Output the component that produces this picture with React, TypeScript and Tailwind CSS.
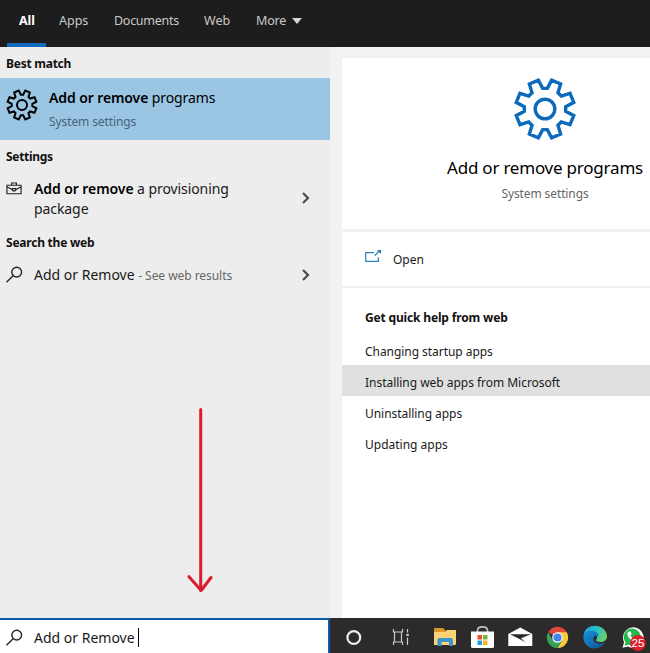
import React from "react";

// Builds the eight-toothed outline of the settings gear around the origin.
const polar = (r: number, deg: number) => {
  const a = (deg * Math.PI) / 180;
  return `${(r * Math.sin(a)).toFixed(2)} ${(-r * Math.cos(a)).toFixed(2)}`;
};
const gearPath =
  "M" +
  Array.from({ length: 8 }, (_, i) => i * 45)
    .flatMap((d) => [polar(20.8, d - 6.5), polar(20.8, d + 6.5), polar(29.5, d + 13), polar(29.5, d + 32)])
    .join("L") +
  "Z";

function Gear({ className, stroke, hub }: { className: string; stroke: number; hub: number }) {
  return (
    <svg viewBox="-32 -32 64 64" className={className} fill="none" stroke="currentColor" strokeWidth={stroke}>
      <path d={gearPath} />
      <circle r={hub} />
    </svg>
  );
}

function SearchIcon() {
  return (
    <svg viewBox="0 0 18 18" className="h-[18px] w-[18px] shrink-0" fill="none" stroke="#262626" strokeWidth="1.4">
      <circle cx="10.7" cy="6.1" r="4.9" />
      <path d="M7.1 9.7L.5 16.2" />
    </svg>
  );
}

function Chevron() {
  return (
    <svg viewBox="0 0 10 14" className="h-[14px] w-[10px] shrink-0" fill="none" stroke="#4c4c4c" strokeWidth="2.2">
      <path d="M2 2L7 7L2 12" />
    </svg>
  );
}

function Header() {
  return (
    <header className="flex h-[46.5px] shrink-0 bg-[#1d1d1d] text-[12.5px] leading-[41px] text-[#c9c9c9]">
      <div className="ml-[7px] h-full w-[39px] border-b-4 border-[#1069bd] pl-3 font-bold tracking-[-0.1px] text-white">All</div>
      <div className="ml-[13px] w-[55px]">Apps</div>
      <div className="w-[90px] tracking-[-0.28px]">Documents</div>
      <div className="w-[52px]">Web</div>
      <div className="flex">
        <span className="tracking-[-0.15px]">More</span>
        <svg viewBox="0 0 10 6" className="ml-[6px] mt-[18px] h-[6px] w-[10px]" fill="#d6d6d6"><path d="M0 0h10L5 6z" /></svg>
      </div>
    </header>
  );
}

function Results() {
  return (
    <section className="flex w-[330px] shrink-0 flex-col bg-[#ededed] text-[#191919]">
      <h2 className="h-[31.5px] pl-[6px] text-[12px] font-bold leading-[33px] tracking-[-0.25px] text-[#111]">Best match</h2>
      <div className="flex h-[62px] bg-[#9ac5e3] pl-[6px] pt-[11px] text-black">
        <Gear className="h-8 w-8 shrink-0" stroke={4} hub={10} />
        <div className="pl-[11px]">
          <p className="-mt-px text-[14px] leading-[20px] tracking-[-0.1px]"><b className="font-semibold">Add or remove</b> programs</p>
          <p className="mt-[5px] text-[12px] leading-[18px] tracking-[-0.1px] text-[#47647a]">System settings</p>
        </div>
      </div>
      <h2 className="h-[32px] pl-[6px] text-[12px] font-bold leading-[34px] tracking-[-0.3px] text-[#111]">Settings</h2>
      <div className="flex h-[55px] pl-[6px]">
        <svg viewBox="0 0 18 15" className="mt-[9px] h-[15px] w-[17px] shrink-0" fill="none" stroke="#222" strokeWidth="1.2">
          <path d="M1 4h15v9H1zM6 4V1.7h5V4M1.2 6l5.4 2.6M15.8 6l-5.4 2.6" />
          <path d="M6.7 7.6h3.6v1.8l-1.8.8-1.8-.8z" />
        </svg>
        <p className="w-[260px] pl-[11px] pt-[7px] text-[14px] leading-[20px] tracking-[-0.08px]">
          <b className="font-semibold text-black">Add or remove</b> a provisioning<br />package
        </p>
        <div className="ml-[18px] mt-[19px]"><Chevron /></div>
      </div>
      <h2 className="h-[32px] pl-[6px] text-[12px] font-bold leading-[31px] tracking-[-0.23px] text-[#111]">Search the web</h2>
      <div className="flex h-[32px] items-center pl-[6px]">
        <SearchIcon />
        <p className="w-[260px] pl-[10px] text-[14px] leading-[20px]">
          Add or Remove <span className="text-[12px] tracking-[-0.05px] text-[#666]">- See web results</span>
        </p>
        <div className="ml-[17px]"><Chevron /></div>
      </div>
    </section>
  );
}

function Details() {
  return (
    <section className="flex min-w-0 grow flex-col bg-[#f2f2f2] pl-3 pt-[11.5px] text-[#1a1a1a]">
      <div className="flex h-[171px] bg-white pt-[19px]">
        <div className="flex w-[406px] shrink-0 flex-col items-center">
          <Gear className="h-16 w-16 text-[#0c6abd]" stroke={3.4} hub={9.8} />
          <h1 className="mt-[15px] whitespace-nowrap text-[17px] leading-[24px] tracking-[-0.22px] text-black">Add or remove programs</h1>
          <p className="mt-[5px] text-[12px] leading-[18px] tracking-[-0.1px] text-[#666]">System settings</p>
        </div>
      </div>
      <div className="mt-[3px] flex h-[54px] bg-white pl-[23px] text-[12px] leading-[55px]">
        <svg viewBox="0 0 16 13" className="mt-[18px] h-[13px] w-4" fill="none" stroke="#2783b8" strokeWidth="1.2">
          <path d="M9 2.7H.7v8.6h12.6V7.2M9.6 5.7l4.2-4.2" />
          <path d="M12 0h4v4z" fill="#2376ad" stroke="none" />
        </svg>
        <span className="pl-3">Open</span>
      </div>
      <div className="mt-[1.5px] grow bg-white pt-[12px] text-[12px] leading-[31px]">
        <h3 className="h-[36px] pl-[23px] font-bold leading-[35px] tracking-[-0.16px] text-[#111]">Get quick help from web</h3>
        <p className="h-[29.5px] pl-[23px] tracking-[-0.05px]">Changing startup apps</p>
        <p className="h-[31px] bg-[#e0e0e0] pl-[23px] leading-[35px] tracking-[-0.03px]">Installing web apps from Microsoft</p>
        <p className="h-[31px] pl-[23px] leading-[35px] tracking-[-0.05px]">Uninstalling apps</p>
        <p className="h-[31px] pl-[23px] leading-[35px]">Updating apps</p>
      </div>
    </section>
  );
}

function Taskbar() {
  return (
    <footer className="flex h-[35px] shrink-0 bg-[#2c2a2b]">
      <div className="flex w-[330px] items-center border-r-2 border-t-2 border-[#0d5ba5] bg-white pl-[6px] pt-[2px] text-[14px] text-[#191919]">
        <SearchIcon />
        <span className="pl-[10px]">Add or Remove</span>
        <span className="ml-[3px] h-[19px] w-px bg-black" />
      </div>
      <svg viewBox="330 618 320 35" className="h-[35px] w-[320px]">
        <circle cx="353.8" cy="637.5" r="6.4" fill="none" stroke="#eee" strokeWidth="2.2" />
        {/* Task view */}
        <g fill="none" stroke="#c9c9c9" strokeWidth="1.2">
          <path d="M393.5 629v3h9v-3M393.5 645v-3h9v3M394.5 632v10M401.5 632v10M407.5 629v3.5M407.5 637.5v7.5" />
          <path d="M406.4 634.9h2.4" strokeWidth="2.2" />
        </g>
        {/* File Explorer */}
        <path d="M434 629q0-1 1-1h8l3 3h9v14h-21z" fill="#d9992b" />
        <path d="M434 632h11l2-2h9v14q0 1-1 1h-20q-1 0-1-1z" fill="#fbd277" />
        <path d="M437.5 646v-6q0-2 2-2h11.5q2 0 2 2v6h-4v-4h-7.5v4z" fill="#3c94cc" />
        {/* Store */}
        <path d="M477.5 632v-1.5q0-3.6 5-3.6t5 3.6v1.5" fill="none" stroke="#bfbfbf" strokeWidth="1.7" />
        <path d="M471 631.5h23v15q0 1.5-1.5 1.5h-20q-1.5 0-1.5-1.5z" fill="#fff" />
        <path d="M477.5 635h4.5v4.5h-4.5z" fill="#e8502e" />
        <path d="M483 635h4.5v4.5H483z" fill="#7cb52d" />
        <path d="M477.5 640.5h4.5v4.5h-4.5z" fill="#189fdc" />
        <path d="M483 640.5h4.5v4.5H483z" fill="#f7b421" />
        {/* Mail */}
        <path d="M508.3 634l12-6.5 12 6.5v12h-24z" fill="#fff" />
        <path d="M510 634.2h21l-10 4 4.5 4.3-5-3z" fill="#29282a" />
        {/* Chrome */}
        <path d="M557.5 637.5L548.24 632.15A10.7 10.7 0 0 1 566.76 632.15z" fill="#de493b" />
        <path d="M557.5 632.15h9.26A10.7 10.7 0 0 1 557.5 648.2l4.6-8z" fill="#f9cb3b" />
        <path d="M548.24 632.15l4.63 8.05 9.2 0L557.5 648.2A10.7 10.7 0 0 1 548.24 632.15z" fill="#36a257" />
        <circle cx="557.5" cy="637.5" r="5.3" fill="#fff" />
        <circle cx="557.5" cy="637.5" r="4.1" fill="#4285e8" />
        {/* Edge */}
        <defs>
          <linearGradient id="edgeTop" x1="0" y1="0.3" x2="1" y2="0.6"><stop stopColor="#249fdc" /><stop offset=".5" stopColor="#28bfc8" /><stop offset="1" stopColor="#6cd45b" /></linearGradient>
          <linearGradient id="edgeBase" x1="0" y1="0" x2="1" y2="1"><stop stopColor="#1594dc" /><stop offset="1" stopColor="#124d91" /></linearGradient>
        </defs>
        <path d="M583.5 636C584 629 589 625.8 595 625.8C602 625.8 607 631 607 636.5C607 640 604 642 600.5 642C597.5 642 595.5 641 596 640C598.5 637 596.5 632.5 591.5 632.5C587 632.5 584 635 583.5 636z" fill="url(#edgeTop)" />
        <path d="M583.4 637.5C583.4 633 587 630.8 591.2 630.8C596 630.8 599 633.5 598.5 637C598 635.5 593.5 634.5 593.5 639C593.5 643 599 645 605 642.6C602.5 646.8 598.5 648.5 595 648.5C588 648.5 583.4 643.5 583.4 637.5z" fill="url(#edgeBase)" />
        {/* WhatsApp */}
        <path d="M622.5 647.8l1.6-5.5A10.3 10.3 0 1 1 628 646.5z" fill="#fff" />
        <path d="M624.5 645.8l1-3.6A8.5 8.5 0 1 1 628.6 644.7z" fill="#27b84b" />
        <path d="M629 631.5l1.6 0 1.1 2.6-1.1 1.5c1 1.9 2.3 3 4.1 3.8l1.5-1.5 2.7 1.3c0 2-2 3.1-4 2.5-4-1.1-6.9-4.1-7.5-7.4-.2-1.3.7-2.6 1.6-2.8z" fill="#fff" />
        <circle cx="638" cy="643" r="7.9" fill="#df1d2c" />
        <text x="638" y="647" textAnchor="middle" fontSize="11.5" fill="#fff" fontFamily="Liberation Sans, sans-serif">25</text>
      </svg>
    </footer>
  );
}

export default function App() {
  return (
    <div className="relative flex h-[653px] w-[650px] flex-col overflow-hidden font-['Noto_Sans','Open_Sans',sans-serif]">
      <Header />
      <main className="flex min-h-0 grow">
        <Results />
        <Details />
      </main>
      <Taskbar />
      {/* Hand-drawn arrow pointing at the search box */}
      <svg viewBox="0 0 30 190" className="absolute left-[186px] top-[405px] h-[190px] w-[30px]" fill="none" stroke="#dc1c29" strokeLinecap="round" strokeLinejoin="round" strokeWidth="3">
        <path d="M14.7 4.5V185.5M3 171.7L15.2 185.5L25 172.5" />
      </svg>
    </div>
  );
}
